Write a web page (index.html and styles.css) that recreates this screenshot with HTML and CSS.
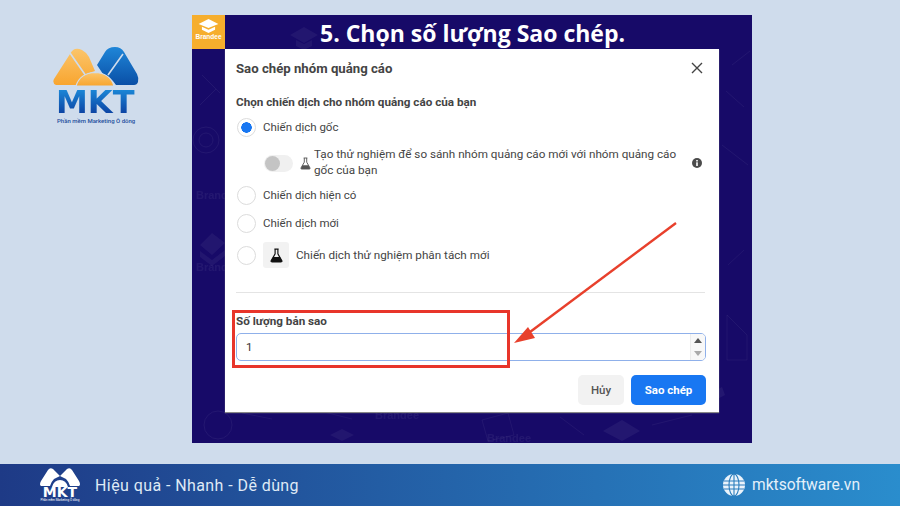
FILE: index.html
```html
<!DOCTYPE html>
<html lang="vi">
<head>
  <meta charset="UTF-8">
  <meta name="viewport" content="width=device-width, initial-scale=1.0">
  <title>Chọn số lượng Sao chép</title>
  <link rel="stylesheet" href="styles.css">
</head>
<body>
  <div class="page">
    <main class="main">
      <div class="brand">
        <svg class="brand-mark" viewBox="0 0 86 40" width="86" height="40">
          <defs>
            <linearGradient id="org" x1="0" y1="0" x2="0" y2="1">
              <stop offset="0" stop-color="#fbc56b"/>
              <stop offset="1" stop-color="#f8a52f"/>
            </linearGradient>
            <linearGradient id="blu" x1="0" y1="0" x2="0" y2="1">
              <stop offset="0" stop-color="#1f86d8"/>
              <stop offset="1" stop-color="#0a4fa6"/>
            </linearGradient>
          </defs>
          <path d="M17 7 Q21 -1 29 3 Q33 5 36 10 L42 24 Q34 26 28 31 Q25 34 23 38 L3 38 Q-1 36 1 32 Z" fill="url(#org)"/>
          <path d="M44 18 L52 5 Q55 0 62 0 Q68 0 71 5 L84 27 Q86 31 85 35 Q84 38 81 38 L63 38 Q58 30 50 27 Z" fill="url(#blu)"/>
          <path d="M17 6 L33 29 M70 7 L55 28" stroke="#cfdcec" stroke-width="1.600" fill="none"/>
          <path d="M23 39 Q27 26 42 25.500 Q57 26 61 39 Z" fill="url(#org)" stroke="#cfdcec" stroke-width="1.200"/>
        </svg>
        <div class="brand-name">MKT</div>
        <div class="brand-sub">Phần mềm Marketing Ô dông</div>
      </div>

      <section class="slide">
        <svg class="doodles" viewBox="0 0 560 428" width="560" height="428">
          <g fill="#fff" opacity="0.05">
            <path d="M98 20 L112 12 L126 20 L112 28 Z M104 25 L112 29 L120 25 L120 31 L112 35 L104 31 Z"/>
            <path d="M8 230 L20 218 L33 228 L20 240 Z M8 236 L20 245 L33 235 L33 241 L20 251 L8 242 Z"/>
            <path d="M138 420 L150 414 L162 420 L150 426 Z"/>
            <path d="M411 416 L430 405 L448 416 L430 426 Z"/>
            <path d="M500 388 L530 372 L533 380 L510 392 Z"/>
          </g>
          <g fill="none" stroke="#fff" stroke-width="1" opacity="0.05">
            <circle cx="14" cy="125" r="13"/>
            <circle cx="14" cy="125" r="7"/>
            <circle cx="26" cy="410" r="14"/>
            <path d="M10 60 L28 78 M8 90 L24 74 M290 405 L316 398 L322 420 L296 426 Z M540 50 L558 36 M534 76 L552 92 M50 398 L80 404 M120 394 L160 404 M368 402 L392 420 M460 410 L500 400 M530 130 L556 150 M536 250 L552 235 M535 300 L555 320 L555 345 L535 345 Z"/>
          </g>
          <g class="doodle-text">
            <text x="4" y="184">Brand</text>
            <text x="4" y="256">Brand</text>
            <text x="183" y="404">Brandee</text>
            <text x="295" y="427">Brandee</text>
          </g>
        </svg>

        <header class="slide-head">
          <div class="tile">
            <svg viewBox="0 0 24 17" width="21" height="14">
              <path d="M12 0 L24 6 L12 11 L0 6 Z" fill="#fff"/>
              <path d="M4 9.500 L12 13 L20 9.500 L20 13 L12 17 L4 13 Z" fill="#fff"/>
            </svg>
            <span>Brandee</span>
          </div>
          <h1 class="slide-title">5. Chọn số lượng Sao chép.</h1>
        </header>

        <div class="modal">
          <div class="modal-head">
            <h2>Sao chép nhóm quảng cáo</h2>
            <svg class="close" viewBox="0 0 12 12" width="12" height="12">
              <path d="M1 1 L11 11 M11 1 L1 11" stroke="#444" stroke-width="1.400"/>
            </svg>
          </div>

          <div class="label">Chọn chiến dịch cho nhóm quảng cáo của bạn</div>

          <div class="option first">
            <span class="radio on"></span>
            <span>Chiến dịch gốc</span>
          </div>
          <div class="experiment">
            <span class="toggle"></span>
            <svg class="flask-sm" viewBox="0 0 12 14" width="11" height="13">
              <path d="M4 1 H8 M4.700 1 V5.500 L1 12 Q0.700 13 2 13 H10 Q11.300 13 11 12 L7.300 5.500 V1" fill="none" stroke="#555" stroke-width="1"/>
              <path d="M2.800 9 H9.200 L11 12.300 Q11 13 10 13 H2 Q1 13 1 12.300 Z" fill="#555"/>
            </svg>
            <p>Tạo thử nghiệm để so sánh nhóm quảng cáo mới với nhóm quảng cáo gốc của bạn</p>
            <svg class="info" viewBox="0 0 10 10" width="10" height="10">
              <circle cx="5" cy="5" r="5" fill="#4b4b4b"/>
              <rect x="4.200" y="4.300" width="1.600" height="3.700" fill="#fff"/>
              <rect x="4.200" y="2" width="1.600" height="1.500" fill="#fff"/>
            </svg>
          </div>
          <div class="option second">
            <span class="radio"></span>
            <span>Chiến dịch hiện có</span>
          </div>
          <div class="option third">
            <span class="radio"></span>
            <span>Chiến dịch mới</span>
          </div>
          <div class="option fourth">
            <span class="radio"></span>
            <span class="icon-box">
              <svg viewBox="0 0 12 14" width="13" height="15">
                <path d="M4 1 H8 M4.700 1 V5.500 L1 12 Q0.700 13 2 13 H10 Q11.300 13 11 12 L7.300 5.500 V1" fill="none" stroke="#111" stroke-width="1.100"/>
                <path d="M2.800 8.500 H9.200 L11 12.300 Q11 13 10 13 H2 Q1 13 1 12.300 Z" fill="#111"/>
              </svg>
            </span>
            <span>Chiến dịch thử nghiệm phân tách mới</span>
          </div>

          <hr class="divider">

          <div class="label qty-label">Số lượng bản sao</div>
          <div class="qty-input">
            <span>1</span>
            <span class="spin">
              <i class="up"></i>
              <i class="down"></i>
            </span>
          </div>

          <div class="actions">
            <button class="btn">Hủy</button>
            <button class="btn primary">Sao chép</button>
          </div>
        </div>

        <div class="red-box"></div>
        <svg class="arrow" viewBox="0 0 560 428" width="560" height="428">
          <path d="M484 208 L338 317" stroke="#e8402c" stroke-width="2.400" fill="none"/>
          <path d="M322 328 L336 312 L343 323 Z" fill="#e8402c"/>
        </svg>
      </section>
    </main>

    <footer class="footer">
      <div class="foot-left">
        <div class="foot-logo">
          <svg viewBox="0 0 40 20" width="40" height="20">
            <path d="M8 3 Q10 0 13 2 L20 9 L14 12 Q11 15 10 19 L1 19 Q-1 18 1 14 Z" fill="#fff"/>
            <path d="M20 9 L27 2 Q30 0 32 3 L39 14 Q41 18 39 19 L30 19 Q29 15 26 12 Z" fill="#fff"/>
            <path d="M12 20 Q14 13 20 13 Q26 13 28 20 Z" fill="#fff"/>
          </svg>
          <b>MKT</b>
          <small>Phần mềm Marketing Ô dông</small>
        </div>
        <span class="slogan">Hiệu quả - Nhanh - Dễ dùng</span>
      </div>
      <div class="foot-right">
        <svg viewBox="0 0 22 22" width="22" height="22">
          <circle cx="11" cy="11" r="11" fill="#eaf3fb"/>
          <g fill="none" stroke="#2a7dbd" stroke-width="1.100">
            <ellipse cx="11" cy="11" rx="5" ry="11"/>
            <path d="M11 0 V22 M1 7 H21 M1 15 H21 M0 11 H22"/>
          </g>
        </svg>
        <span>mktsoftware.vn</span>
      </div>
    </footer>
  </div>
</body>
</html>
```

FILE: styles.css
```css
* {
  box-sizing: border-box;
}
html, body {
  margin: 0;
  padding: 0;
}
body {
  font-family: "Roboto", "Liberation Sans", sans-serif;
}
.page {
  width: 900px;
  height: 506px;
  display: flex;
  flex-direction: column;
  background: #cfdcec;
  overflow: hidden;
}
.main {
  height: 464px;
  display: flex;
  padding-top: 15px;
}

/* logo */
.brand {
  width: 192px;
  padding: 32px 0 0 53px;
}
.brand-mark {
  display: block;
}
.brand-name {
  width: 86px;
  margin: 3px 0 0 0;
  padding-left: 3px;
  font: bold 32px/25px "DejaVu Sans", sans-serif;
  background: linear-gradient(#1b86d6, #0b3fa0);
  -webkit-background-clip: text;
  background-clip: text;
  color: transparent;
}
.brand-sub {
  margin: 2px 0 0 4px;
  font: 500 6px/8px "Roboto", sans-serif;
  color: #1d4e9c;
  white-space: nowrap;
}

/* slide */
.slide {
  position: relative;
  width: 560px;
  height: 428px;
  background: #170a68;
}
.doodles, .arrow {
  position: absolute;
  left: 0;
  top: 0;
}
.doodle-text {
  font: bold 11px "Liberation Sans", sans-serif;
  fill: #fff;
  opacity: 0.05;
}
.slide-head {
  position: relative;
  display: flex;
  height: 34px;
}
.tile {
  width: 33px;
  display: flex;
  flex-direction: column;
  align-items: center;
  padding-top: 4px;
  background: #f6ae2d;
  color: #fff;
  font: bold 6.500px/8px "Liberation Sans", sans-serif;
}
.slide-title {
  margin: 0;
  padding-left: 95px;
  font: bold 23px/36px "Open Sans", sans-serif;
  color: #fff;
  white-space: nowrap;
}

/* modal */
.modal {
  position: relative;
  width: 494px;
  height: 363px;
  margin-left: 33px;
  padding: 0 13px 0 11px;
  background: #fff;
  color: #444;
  font-size: 11.500px;
  box-shadow: 0 1px 1px #888;
}
.modal-head {
  height: 38px;
  display: flex;
  justify-content: space-between;
  align-items: center;
}
.modal-head h2 {
  margin: 0;
  font-size: 13.200px;
  font-weight: 700;
  color: #444;
}
.close {
  margin-right: 3px;
}
.label {
  margin-top: 8px;
  height: 14px;
  font-size: 11.700px;
  line-height: 14px;
  font-weight: 700;
  color: #444;
}
.option {
  display: flex;
  align-items: center;
  height: 26px;
}
.option.first {
  margin-top: 5px;
}
.option.second {
  margin-top: 1px;
}
.option.third {
  margin-top: 2px;
}
.option.fourth {
  margin-top: 6px;
  font-size: 11.700px;
}
.radio {
  width: 19px;
  height: 19px;
  margin: 0 7px 0 1px;
  border: 1px solid #dcdcdc;
  border-radius: 50%;
  background: #fff;
  flex: none;
}
.radio.on {
  background: radial-gradient(circle, #1877f2 0 5px, #fff 5.500px);
}
.experiment {
  display: flex;
  margin-top: 5px;
  height: 36px;
  padding: 1px 0 0 28px;
  line-height: 16px;
  font-size: 11.700px;
}
.toggle {
  position: relative;
  width: 29px;
  height: 17px;
  margin-top: 9px;
  border-radius: 9px;
  background: #f0f0f0;
  flex: none;
}
.toggle::before {
  content: "";
  display: block;
  width: 15px;
  height: 15px;
  margin: 1px;
  border-radius: 50%;
  background: #c4c4c4;
}
.flask-sm {
  margin: 11px 3px 0 7px;
  flex: none;
}
.experiment p {
  margin: 0;
  width: 372px;
  flex: none;
}
.info {
  margin: 12px 0 0 6px;
  flex: none;
}
.icon-box {
  width: 26px;
  height: 26px;
  margin-right: 7px;
  display: flex;
  align-items: center;
  justify-content: center;
  border-radius: 3px;
  background: #f2f2f2;
}
.divider {
  margin: 24px 1px 0 0;
  border: 0;
  border-top: 1px solid #e4e4e4;
}
.label.qty-label {
  margin-top: 21px;
}
.qty-input {
  display: flex;
  justify-content: space-between;
  align-items: center;
  height: 28px;
  margin-top: 5px;
  padding-left: 9px;
  border: 1px solid #8fb0ea;
  border-radius: 5px;
  overflow: hidden;
  font-size: 11.500px;
  color: #333;
}
.spin {
  width: 15px;
  height: 26px;
  display: flex;
  flex-direction: column;
  border-left: 1px solid #ececec;
  background: #f8f8f8;
}
.spin i {
  flex: 1;
  display: flex;
  align-items: center;
  justify-content: center;
}
.spin i::before {
  content: "";
  border-left: 4px solid transparent;
  border-right: 4px solid transparent;
}
.spin .up::before {
  border-bottom: 5px solid #555;
}
.spin .down::before {
  border-top: 5px solid #aaa;
}
.actions {
  display: flex;
  justify-content: flex-end;
  gap: 7px;
  margin-top: 14px;
}
.btn {
  height: 30px;
  width: 46px;
  border: 0;
  border-radius: 5px;
  background: #f2f2f2;
  color: #555;
  font: 500 11.500px "Roboto", sans-serif;
}
.btn.primary {
  width: 75px;
  background: #1877f2;
  color: #fff;
  font-weight: 700;
}

/* highlight box, over the modal */
.red-box {
  position: absolute;
  left: 40px;
  top: 295px;
  width: 278px;
  height: 58px;
  border: 3px solid #e8352a;
}
.arrow {
  pointer-events: none;
}

/* footer */
.footer {
  height: 42px;
  display: flex;
  justify-content: space-between;
  align-items: center;
  padding: 0 40px;
  background: linear-gradient(90deg, #1e3a86, #2a8dcd);
}
.foot-left, .foot-right {
  display: flex;
  align-items: center;
}
.foot-logo {
  width: 40px;
  display: flex;
  flex-direction: column;
  align-items: center;
  color: #fff;
}
.foot-logo svg {
  display: block;
}
.foot-logo b {
  font: bold 14px/11px "DejaVu Sans", sans-serif;
}
.foot-logo small {
  font: 3px/5px "Roboto", sans-serif;
  white-space: nowrap;
}
.slogan {
  margin-left: 15px;
  font-size: 16px;
  letter-spacing: 0.420px;
  color: #dfeaf6;
}
.foot-right {
  gap: 7px;
  color: #e4f0fa;
  font-size: 15.600px;
}
```
